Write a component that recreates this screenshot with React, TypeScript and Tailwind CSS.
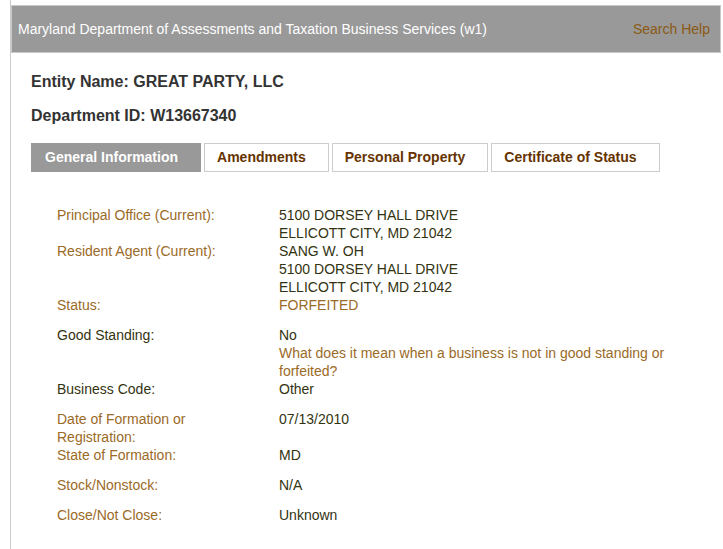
const rows: { label: string; dark?: boolean; values: { text: string; link?: boolean }[]; gap?: boolean }[] = [
  {
    label: "Principal Office (Current):",
    values: [{ text: "5100 DORSEY HALL DRIVE" }, { text: "ELLICOTT CITY, MD 21042" }],
  },
  {
    label: "Resident Agent (Current):",
    values: [
      { text: "SANG W. OH" },
      { text: "5100 DORSEY HALL DRIVE" },
      { text: "ELLICOTT CITY, MD 21042" },
    ],
  },
  { label: "Status:", values: [{ text: "FORFEITED", link: true }], gap: true },
  {
    label: "Good Standing:",
    dark: true,
    values: [
      { text: "No" },
      { text: "What does it mean when a business is not in good standing or forfeited?", link: true },
    ],
  },
  { label: "Business Code:", dark: true, values: [{ text: "Other" }], gap: true },
  { label: "Date of Formation or Registration:", values: [{ text: "07/13/2010" }] },
  { label: "State of Formation:", values: [{ text: "MD" }], gap: true },
  { label: "Stock/Nonstock:", values: [{ text: "N/A" }], gap: true },
  { label: "Close/Not Close:", values: [{ text: "Unknown" }] },
];

const tabs = ["General Information", "Amendments", "Personal Property", "Certificate of Status"];

export default function App() {
  return (
    <div className="min-h-screen bg-white font-['Liberation_Sans',Arial,sans-serif]">
      <div className="ml-[10px] min-h-[549px] border-l border-[#cccccc] pt-[5px] pr-[2px]">
        <div className="flex h-[48px] items-center justify-between border border-[#c8c8c8] bg-[#999999] pl-[6px] pr-[10px] text-[14px]">
          <span className="text-white">
            Maryland Department of Assessments and Taxation Business Services (w1)
          </span>
          <a href="#" className="text-[#8b5a14]">
            Search Help
          </a>
        </div>

        <div className="pl-[20px]">
          <h1 className="mt-[19px] text-[16px] leading-[20px] font-bold text-[#333333]">
            Entity Name: GREAT PARTY, LLC
          </h1>
          <h2 className="mt-[14px] text-[16px] leading-[20px] font-bold text-[#333333]">
            Department ID: W13667340
          </h2>

          <div className="mt-[17px] flex gap-[3px]">
            {tabs.map((t, i) => (
              <div
                key={t}
                className={
                  i === 0
                    ? "h-[29px] border border-[#999999] bg-[#999999] pl-[13px] pr-[22px] text-[14px] leading-[27px] font-bold text-white"
                    : "h-[29px] border border-[#cccccc] bg-white pl-[12px] pr-[22px] text-[14px] leading-[27px] font-bold text-[#663300]"
                }
              >
                {t}
              </div>
            ))}
          </div>

          <div className="mt-[34px] pl-[26px] text-[14px] leading-[18px]">
            {rows.map((r) => (
              <div key={r.label} className={r.gap ? "mb-[12px] flex" : "flex"}>
                <div className={r.dark ? "w-[190px] shrink-0 text-[#333311]" : "w-[190px] shrink-0 text-[#9b6a27]"}>
                  {r.label}
                </div>
                <div className="ml-[32px] w-[400px]">
                  {r.values.map((v) => (
                    <div key={v.text} className={v.link ? "text-[#9b6a27]" : "text-[#333311]"}>
                      {v.text}
                    </div>
                  ))}
                </div>
              </div>
            ))}
          </div>
        </div>
      </div>
    </div>
  );
}
